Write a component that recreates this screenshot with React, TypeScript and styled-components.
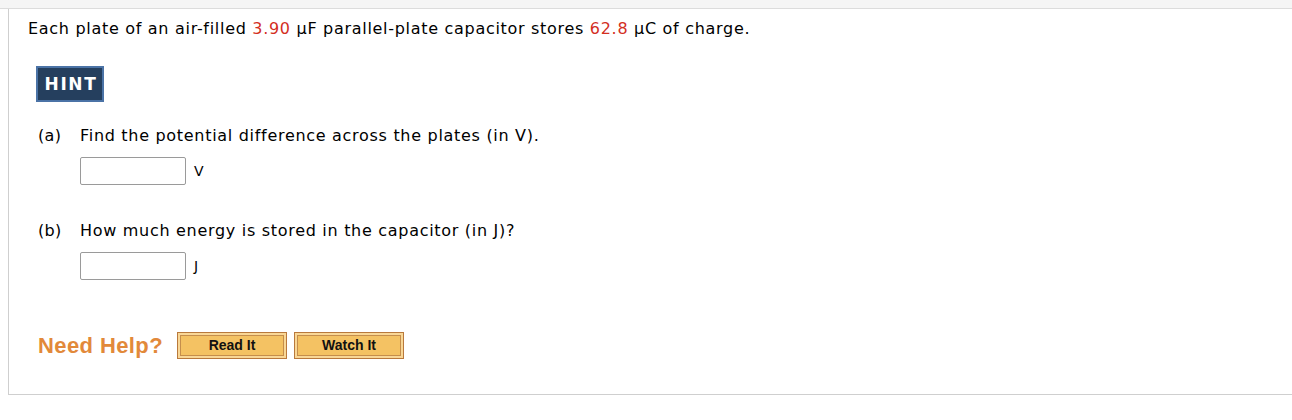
import React from 'react'
import styled, { createGlobalStyle } from 'styled-components'

const GlobalStyle = createGlobalStyle`
  html, body {
    margin: 0;
    padding: 0;
    background: #fff;
  }
  body {
    font-family: Verdana, "DejaVu Sans", sans-serif;
    color: #000;
  }
`

const App: React.FC = () => {
  return (
    <>
      <GlobalStyle />
      <TopStrip />
      <Question>
        <Prompt>
          Each plate of an air-filled <Value>3.90</Value> μF parallel-plate capacitor stores{' '}
          <Value>62.8</Value> μC of charge.
        </Prompt>
        <HintButton>HINT</HintButton>
        <Part>
          <PartRow>
            <PartLabel>(a)</PartLabel>
            <span>Find the potential difference across the plates (in V).</span>
          </PartRow>
          <AnswerRow>
            <AnswerInput />
            <Unit>V</Unit>
          </AnswerRow>
        </Part>
        <Part>
          <PartRow>
            <PartLabel>(b)</PartLabel>
            <span>How much energy is stored in the capacitor (in J)?</span>
          </PartRow>
          <AnswerRow>
            <AnswerInput />
            <Unit>J</Unit>
          </AnswerRow>
        </Part>
        <HelpBar>
          <HelpTitle>Need Help?</HelpTitle>
          <HelpButton>Read It</HelpButton>
          <HelpButton>Watch It</HelpButton>
        </HelpBar>
      </Question>
    </>
  )
}

const TopStrip = styled.div`
  height: 8px;
  background: #f5f5f5;
  border-bottom: 1px solid #dcdcdc;
`
const Question = styled.div`
  margin-left: 8px;
  height: 386px;
  box-sizing: border-box;
  border-left: 1px solid #cfcfcf;
  border-bottom: 1px solid #cfcfcf;
  padding: 10px 0 0 19px;
`
const Prompt = styled.p`
  margin: 0;
  font-size: 16px;
  line-height: 20px;
  letter-spacing: 0.7px;
`
const Value = styled.span`
  color: #d32f1f;
`
const HintButton = styled.div`
  margin: 27px 0 0 8px;
  width: 68px;
  height: 36px;
  box-sizing: border-box;
  border: 2px solid #4b73a6;
  background: #253f5e;
  color: #fff;
  font-weight: bold;
  font-size: 17px;
  letter-spacing: 1.6px;
  padding-left: 2px;
  display: flex;
  align-items: center;
  justify-content: center;
`
const Part = styled.div`
  margin-left: 10px;
  margin-top: 24px;
  & + & {
    margin-top: 36px;
  }
`
const PartRow = styled.div`
  display: flex;
  font-size: 16px;
  line-height: 20px;
  letter-spacing: 0.7px;
`
const PartLabel = styled.span`
  width: 42px;
  letter-spacing: 0.3px;
`
const AnswerRow = styled.div`
  display: flex;
  align-items: center;
  margin: 11px 0 0 42px;
`
const AnswerInput = styled.input`
  width: 106px;
  height: 28px;
  box-sizing: border-box;
  border: 1px solid #9a9a9a;
  border-radius: 2px;
  margin: 0;
`
const Unit = styled.span`
  font-size: 14px;
  margin-left: 8px;
`
const HelpBar = styled.div`
  display: flex;
  align-items: center;
  margin: 51px 0 0 10px;
`
const HelpTitle = styled.span`
  font-family: "Liberation Sans", Arial, sans-serif;
  font-weight: bold;
  font-size: 22px;
  letter-spacing: 0.4px;
  color: #e2893a;
  margin-right: 14px;
  padding-top: 2px;
`
const HelpButton = styled.button`
  width: 110px;
  height: 27px;
  margin: 0 7px 0 0;
  padding: 0;
  box-sizing: border-box;
  border: 1px solid #b9793c;
  background: #f4c263;
  box-shadow: inset 0 0 0 2px #f9d796, inset 0 0 0 3px #c58e4c;
  font-family: "Liberation Sans", Arial, sans-serif;
  font-weight: bold;
  font-size: 14px;
  color: #111;
`

export default App
